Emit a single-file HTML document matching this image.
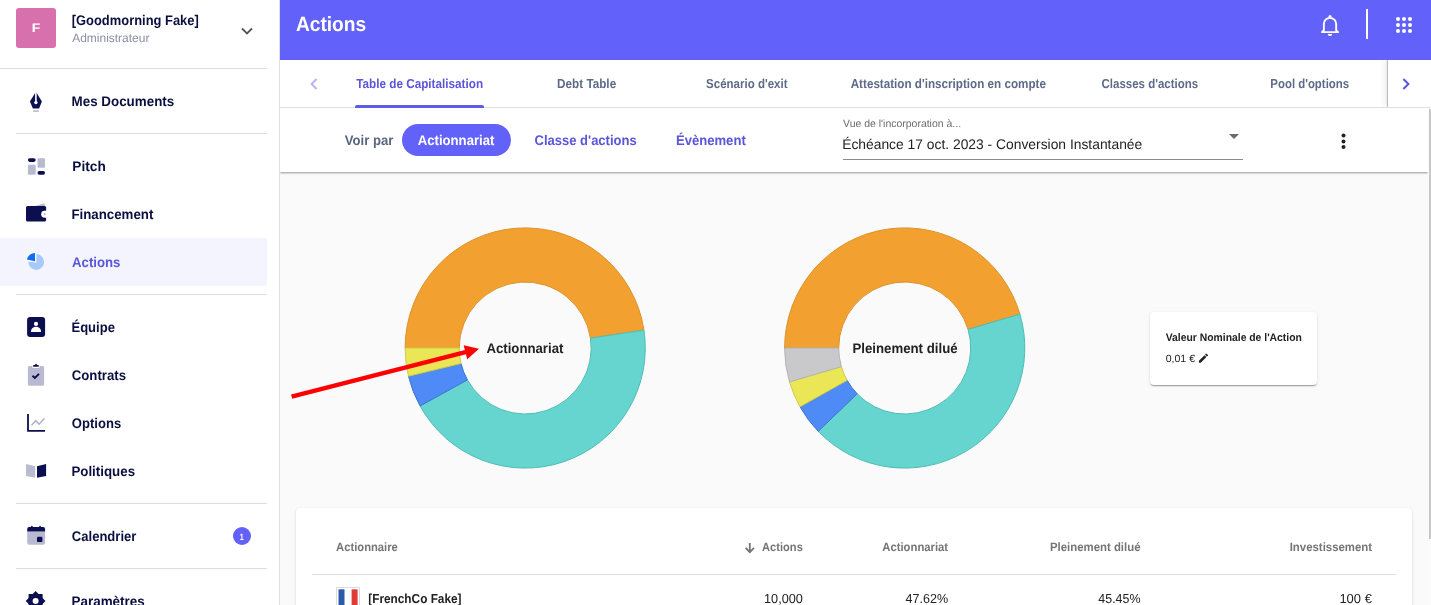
<!DOCTYPE html>
<html lang="fr">
<head>
<meta charset="utf-8">
<title>Actions</title>
<style>
*{box-sizing:border-box;margin:0;padding:0}
html,body{width:1431px;height:605px;overflow:hidden;background:#fafafa;font-family:"Liberation Sans",sans-serif;color:#0b0f3f}
.abs{position:absolute}
#txt{position:absolute;left:0;top:0;width:1431px;height:605px;z-index:9;will-change:transform;overflow:hidden}
.t{text-rendering:geometricPrecision;position:absolute;left:0;top:0;white-space:nowrap;line-height:20px;transform-origin:0 0;display:block}
#side{z-index:5;position:absolute;left:0;top:0;width:280px;height:605px;background:#fff;border-right:1px solid #dedede}
.div{position:absolute;left:16px;width:251px;height:1px;background:#dcdcdc}
#top{z-index:4;position:absolute;left:280px;top:0;width:1151px;height:60px;background:#6261fa}
#tabs{z-index:3;overflow:hidden;position:absolute;left:280px;top:60px;width:1151px;height:48px;background:#fff}
#filter{position:absolute;left:280px;top:108px;width:1148px;height:64px;background:#fff;box-shadow:0 1px 2px rgba(0,0,0,.4)}
svg{position:absolute;overflow:visible}

</style>
</head>
<body>
<div id="side">
  <div class="abs" style="left:16px;top:8px;width:40px;height:40px;border-radius:3px;background:#d970ae"></div>
  <svg style="left:239px;top:23px" width="16" height="16" viewBox="0 0 16 16"><path d="M3 5.5l5 5 5-5" fill="none" stroke="#555" stroke-width="1.8"/></svg>
  <div class="div" style="left:0;width:267px;top:68px"></div>
  <div class="div" style="top:133px"></div>
  <div class="abs" style="left:0;top:238px;width:267px;height:48px;background:#f3f4fe"></div>
  <div class="div" style="top:294px"></div>
  <div class="div" style="top:503px"></div>
  <div class="abs" style="left:233px;top:527px;width:18px;height:18px;border-radius:50%;background:#6261fa"></div>
  <div class="div" style="top:568px"></div>
<svg id="icons" style="left:0;top:0" width="280" height="605" viewBox="0 0 280 605">
<path d="M35.9 91.8L41.9 101.5 39.1 108.4H32.9L29.9 101.5Z" fill="#0b0f4f"/>
<rect x="35.1" y="91" width="1.6" height="11" fill="#fff"/><circle cx="35.9" cy="102.6" r="1.7" fill="#fff"/>
<rect x="33.1" y="110.4" width="5.7" height="1.3" fill="#a9aac4"/>
<rect x="27.9" y="158.2" width="7.8" height="3.7" rx="1.8" fill="#0b0f4f"/>
<rect x="37.5" y="158.2" width="7.5" height="9.6" rx="1" fill="#b9bad2"/>
<rect x="27.9" y="164.8" width="7.8" height="10" rx="1" fill="#b9bad2"/>
<rect x="37.5" y="171" width="7.5" height="3.7" rx="1.8" fill="#0b0f4f"/>
<path d="M35 206L44.3 203.2 45 206Z" fill="#b9bad2"/>
<rect x="26" y="205.9" width="20.1" height="15.7" rx="1.6" fill="#0b0f4f"/>
<circle cx="44.6" cy="214.2" r="3.4" fill="#fff"/><rect x="44.6" y="210.8" width="2" height="6.8" fill="#fff"/><circle cx="44.6" cy="214.2" r="1" fill="#b0b0c0"/>
<path d="M36.2 262V254.1A7.9 7.9 0 1 1 28.3 262Z" fill="#a9c8fb"/>
<path d="M35 261.2V252.9A8.3 8.3 0 0 0 26.9 259.4Z" fill="#0d6ef5" stroke="#fbfbff" stroke-width="2.6" paint-order="stroke"/>
<rect x="27.1" y="316.9" width="18" height="20.2" rx="3" fill="#0b0f4f"/>
<circle cx="36" cy="323.9" r="2.1" fill="#fff"/><path d="M30.9 332.1C30.9 325 41.1 325 41.1 332.1Z" fill="#fff"/>
<rect x="27.9" y="365.9" width="16.2" height="19.9" rx="1.6" fill="#b9bad2"/>
<rect x="32.2" y="363.5" width="7.5" height="4.4" rx="1.5" fill="#fff"/>
<rect x="33.1" y="364.9" width="5.7" height="1.9" rx="0.6" fill="#0b0f4f"/><rect x="35.2" y="363.9" width="1.6" height="1.5" fill="#0b0f4f"/>
<path d="M32.5 375.7L34.9 377.9 39 373.9" fill="none" stroke="#0b0f4f" stroke-width="2"/>
<path d="M28 414.1V430.9H45" fill="none" stroke="#0b0f4f" stroke-width="1.8"/>
<path d="M31.5 425.2L35.8 420.7 39.1 424.2 44.4 418.2" fill="none" stroke="#b0b1c8" stroke-width="1.5"/>
<path d="M26.05 463.9L35.2 466.2V477.8L26.05 476Z" fill="#b9bad2"/>
<path d="M37 466.2L46.1 463.9V476L37 477.8Z" fill="#0b0f4f"/>
<path d="M27.2 531.5H45.1V542.8A2 2 0 0 1 43.1 544.8H29.2A2 2 0 0 1 27.2 542.8Z" fill="#b9bad2"/>
<path d="M27.2 531.5V529.1A2 2 0 0 1 29.2 527.1H43.1A2 2 0 0 1 45.1 529.1V531.5Z" fill="#0b0f4f"/>
<rect x="31.1" y="525.9" width="1.5" height="2" fill="#0b0f4f"/><rect x="39.2" y="525.9" width="1.6" height="2" fill="#0b0f4f"/>
<rect x="37" y="536.8" width="5.4" height="5.3" rx="1.2" fill="#0b0f4f"/>
<g transform="translate(35.6 601)"><rect x="-7" y="-7" width="14" height="14" fill="#0b0f4f"/><rect x="-7" y="-7" width="14" height="14" fill="#0b0f4f" transform="rotate(45)"/><circle r="3" fill="#fff"/></g>
</svg>
</div>
<div id="top">
  <div class="abs" style="left:1086px;top:9px;width:2px;height:30px;background:#fff"></div>
  <svg id="grid" style="left:1115px;top:16px" width="18" height="18" viewBox="0 0 18 18" fill="#fff"><circle cx="3" cy="3" r="2"/><circle cx="9" cy="3" r="2"/><circle cx="15" cy="3" r="2"/><circle cx="3" cy="9" r="2"/><circle cx="9" cy="9" r="2"/><circle cx="15" cy="9" r="2"/><circle cx="3" cy="15" r="2"/><circle cx="9" cy="15" r="2"/><circle cx="15" cy="15" r="2"/></svg>
</div>
<div id="tabs">
  <svg style="left:30px;top:18px" width="8" height="12" viewBox="0 0 8 12"><path d="M6.6 1L1.6 6l5 5" fill="none" stroke="#b7b4ef" stroke-width="2"/></svg>
  <div class="abs" style="left:1108px;top:0;width:43px;height:47px;background:#fff;box-shadow:-1px 0 1px rgba(0,0,0,.22),-4px 0 6px rgba(0,0,0,.06)"></div>
  <svg style="left:1122px;top:18px" width="8" height="12" viewBox="0 0 8 12"><path d="M1.4 1l5 5-5 5" fill="none" stroke="#5b55d9" stroke-width="2"/></svg>
  <div class="abs" style="left:0;top:47px;width:1151px;height:1px;background:#e0e0e0"></div>
  <div class="abs" style="left:75px;top:45px;width:129.3px;height:3px;background:#5d5be8;border-radius:2px 2px 0 0"></div>
</div>
<div id="filter">
  <div class="abs" style="left:122px;top:16px;width:109px;height:32px;border-radius:16px;background:#6261fa"></div>
  <div class="abs" style="left:563px;top:51px;width:400px;height:1px;background:#8a8a8a"></div>
  <svg style="left:949px;top:26px" width="10" height="5" viewBox="0 0 10 5"><path d="M0 0h10L5 5z" fill="#6b6b6b"/></svg>
  <svg style="left:1061px;top:25px" width="5" height="17" viewBox="0 0 5 17" fill="#222"><circle cx="2.5" cy="2.6" r="2"/><circle cx="2.5" cy="8.4" r="2"/><circle cx="2.5" cy="14.1" r="2"/></svg>
</div>
<div class="abs" style="left:1428px;top:108px;width:3px;height:497px;background:#fbfbfb"></div>
<div class="abs" style="left:1429px;top:109px;width:2px;height:430px;background:#c8c8c8"></div>
<svg id="charts" style="left:280px;top:173px" width="1151" height="432" viewBox="280 173 1151 432">
<path d="M405.10 348.00A120.1 120.1 0 0 1 643.96 330.10L590.46 338.16A66.0 66.0 0 0 0 459.20 348.00Z" fill="#f2a131" stroke="#dc922c" stroke-width="1" stroke-linejoin="round"/>
<path d="M643.96 330.10A120.1 120.1 0 0 1 420.03 405.99L467.40 379.87A66.0 66.0 0 0 0 590.46 338.16Z" fill="#67d5cf" stroke="#4fbdb4" stroke-width="1" stroke-linejoin="round"/>
<path d="M420.03 405.99A120.1 120.1 0 0 1 408.45 376.18L461.04 363.49A66.0 66.0 0 0 0 467.40 379.87Z" fill="#4f8bf7" stroke="#3f74d4" stroke-width="1" stroke-linejoin="round"/>
<path d="M408.45 376.18A120.1 120.1 0 0 1 405.10 348.00L459.20 348.00A66.0 66.0 0 0 0 461.04 363.49Z" fill="#ebe655" stroke="#cfca4c" stroke-width="1" stroke-linejoin="round"/>
<path d="M784.60 348.00A120.1 120.1 0 0 1 1019.94 314.17L968.03 329.41A66.0 66.0 0 0 0 838.70 348.00Z" fill="#f2a131" stroke="#dc922c" stroke-width="1" stroke-linejoin="round"/>
<path d="M1019.94 314.17A120.1 120.1 0 0 1 818.21 431.32L857.17 393.79A66.0 66.0 0 0 0 968.03 329.41Z" fill="#67d5cf" stroke="#4fbdb4" stroke-width="1" stroke-linejoin="round"/>
<path d="M818.21 431.32A120.1 120.1 0 0 1 800.00 406.83L847.16 380.33A66.0 66.0 0 0 0 857.17 393.79Z" fill="#4f8bf7" stroke="#3f74d4" stroke-width="1" stroke-linejoin="round"/>
<path d="M800.00 406.83A120.1 120.1 0 0 1 789.47 381.87L841.38 366.61A66.0 66.0 0 0 0 847.16 380.33Z" fill="#ebe655" stroke="#cfca4c" stroke-width="1" stroke-linejoin="round"/>
<path d="M789.47 381.87A120.1 120.1 0 0 1 784.60 348.00L838.70 348.00A66.0 66.0 0 0 0 841.38 366.61Z" fill="#c9c9cb" stroke="#b4b4b6" stroke-width="1" stroke-linejoin="round"/>
<polygon points="292.13,398.68 465.97,354.25 467.23,359.19 479.00,348.70 463.64,345.14 464.90,350.08 291.07,394.52" fill="#ff0000"/>
</svg>
<div class="abs" style="left:1150px;top:312px;width:167px;height:73px;border-radius:4px;background:#fff;box-shadow:0 2px 1px -1px rgba(0,0,0,.2),0 1px 1px 0 rgba(0,0,0,.14),0 1px 3px 0 rgba(0,0,0,.12)"></div>
<div class="abs" style="left:296px;top:508px;width:1116px;height:120px;border-radius:4px;background:#fff;box-shadow:0 2px 1px -1px rgba(0,0,0,.2),0 1px 1px 0 rgba(0,0,0,.14),0 1px 3px 0 rgba(0,0,0,.12)"></div>
<div class="abs" style="left:312px;top:574px;width:1084px;height:1px;background:#dedede"></div>
<svg style="left:0;top:0;z-index:8" width="1431" height="605" viewBox="0 0 1431 605">
<path d="M1321.9 32.1L1323.85 30.2V24A6.15 6.15 0 0 1 1336.15 24V30.2L1338.1 32.1Z" fill="none" stroke="#fff" stroke-width="1.9" stroke-linejoin="round"/><circle cx="1330" cy="16.4" r="1.5" fill="#fff"/><path d="M1327.8 34H1332.2A2.2 1.9 0 0 1 1327.8 34Z" fill="#fff"/>
<path d="M749.8 543V552M745.6 547.9L749.8 552.2 754 547.9" fill="none" stroke="#757575" stroke-width="1.8"/>
<g transform="translate(1197.4 352.1) scale(0.505)"><path d="M3 17.25V21h3.750L17.810 9.940l-3.750-3.750L3 17.250zM20.710 7.040a.996.996 0 0 0 0-1.410l-2.340-2.340a.996.996 0 0 0-1.410 0l-1.830 1.830 3.750 3.750 1.830-1.830z" fill="#222"/></g>
<rect x="336.5" y="587.5" width="23" height="20" fill="#fff" stroke="#dcdcdc" stroke-width="1"/>
<rect x="338.5" y="589.3" width="6" height="16" fill="#2b5caa"/>
<rect x="351.6" y="589.3" width="6" height="16" fill="#e03c38"/>
</svg>

<div id="txt">
<span class="t" id="t_org" style="font-size:14px;font-weight:bold;color:#0b0f3f;transform:translate(71.73px,10.00px) scaleX(0.9228)">[Goodmorning Fake]</span>
<span class="t" id="t_adm" style="font-size:12px;font-weight:normal;color:#8a8fa3;transform:translate(72.16px,28.00px) scaleX(0.9988)">Administrateur</span>
<span class="t" id="t_F" style="font-size:12.5px;font-weight:bold;color:#ffffff;transform:translate(31.86px,18.00px) scaleX(1.1202)">F</span>
<span class="t" id="s_doc" style="font-size:14px;font-weight:bold;color:#0b0f3f;transform:translate(71.58px,91.00px) scaleX(0.9561)">Mes Documents</span>
<span class="t" id="s_pit" style="font-size:14px;font-weight:bold;color:#0b0f3f;transform:translate(72.36px,156.00px) scaleX(0.9761)">Pitch</span>
<span class="t" id="s_fin" style="font-size:14px;font-weight:bold;color:#0b0f3f;transform:translate(71.40px,204.00px) scaleX(0.9493)">Financement</span>
<span class="t" id="s_act" style="font-size:14px;font-weight:bold;color:#5b55d9;transform:translate(72.00px,252.00px) scaleX(0.9436)">Actions</span>
<span class="t" id="s_equ" style="font-size:14px;font-weight:bold;color:#0b0f3f;transform:translate(71.44px,317.00px) scaleX(0.9311)">Équipe</span>
<span class="t" id="s_con" style="font-size:14px;font-weight:bold;color:#0b0f3f;transform:translate(71.73px,365.00px) scaleX(0.9444)">Contrats</span>
<span class="t" id="s_opt" style="font-size:14px;font-weight:bold;color:#0b0f3f;transform:translate(71.85px,413.00px) scaleX(0.9330)">Options</span>
<span class="t" id="s_pol" style="font-size:14px;font-weight:bold;color:#0b0f3f;transform:translate(71.40px,461.00px) scaleX(0.9515)">Politiques</span>
<span class="t" id="s_cal" style="font-size:14px;font-weight:bold;color:#0b0f3f;transform:translate(71.87px,526.00px) scaleX(0.9307)">Calendrier</span>
<span class="t" id="s_par" style="font-size:14px;font-weight:bold;color:#0b0f3f;transform:translate(71.51px,591.00px) scaleX(0.9602)">Paramètres</span>
<span class="t" id="s_bdg" style="font-size:9px;font-weight:bold;color:#ffffff;transform:translate(239.87px,527.00px) scaleX(0.7909)">1</span>
<span class="t" id="h_act" style="font-size:20.6px;font-weight:bold;color:#ffffff;transform:translate(295.91px,15.00px) scaleX(0.9307)">Actions</span>
<span class="t" id="tb1" style="font-size:13px;font-weight:bold;color:#5b55d9;transform:translate(356.22px,74.00px) scaleX(0.9023)">Table de Capitalisation</span>
<span class="t" id="tb2" style="font-size:13px;font-weight:bold;color:#5d6b89;transform:translate(557.10px,74.00px) scaleX(0.9016)">Debt Table</span>
<span class="t" id="tb3" style="font-size:13px;font-weight:bold;color:#5d6b89;transform:translate(706.08px,74.00px) scaleX(0.8851)">Scénario d'exit</span>
<span class="t" id="tb4" style="font-size:13px;font-weight:bold;color:#5d6b89;transform:translate(850.70px,74.00px) scaleX(0.8971)">Attestation d'inscription en compte</span>
<span class="t" id="tb5" style="font-size:13px;font-weight:bold;color:#5d6b89;transform:translate(1101.51px,74.00px) scaleX(0.8842)">Classes d'actions</span>
<span class="t" id="tb6" style="font-size:13px;font-weight:bold;color:#5d6b89;transform:translate(1270.37px,74.00px) scaleX(0.8769)">Pool d'options</span>
<span class="t" id="f_voir" style="font-size:14px;font-weight:bold;color:#5a6680;transform:translate(344.78px,130.00px) scaleX(0.9367)">Voir par</span>
<span class="t" id="f_pill" style="font-size:14px;font-weight:bold;color:#ffffff;transform:translate(417.69px,130.00px) scaleX(0.9395)">Actionnariat</span>
<span class="t" id="f_cls" style="font-size:14px;font-weight:bold;color:#5b55d9;transform:translate(534.52px,130.00px) scaleX(0.9293)">Classe d'actions</span>
<span class="t" id="f_evt" style="font-size:14px;font-weight:bold;color:#5b55d9;transform:translate(675.94px,130.00px) scaleX(0.9346)">Évènement</span>
<span class="t" id="f_lbl" style="font-size:10.5px;font-weight:normal;color:#6b6b6b;transform:translate(843.06px,114.00px) scaleX(0.9968)">Vue de l'incorporation à...</span>
<span class="t" id="f_val" style="font-size:14px;font-weight:normal;color:#222222;transform:translate(842.18px,134.00px) scaleX(0.9885)">Échéance 17 oct. 2023 - Conversion Instantanée</span>
<span class="t" id="d_1" style="font-size:14px;font-weight:bold;color:#222222;transform:translate(486.40px,338.00px) scaleX(0.9425)">Actionnariat</span>
<span class="t" id="d_2" style="font-size:14px;font-weight:bold;color:#222222;transform:translate(852.43px,338.00px) scaleX(0.9451)">Pleinement dilué</span>
<span class="t" id="c_t" style="font-size:11px;font-weight:bold;color:#222222;transform:translate(1165.73px,328.00px) scaleX(0.9425)">Valeur Nominale de l'Action</span>
<span class="t" id="c_v" style="font-size:10.5px;font-weight:normal;color:#222222;transform:translate(1165.65px,349.00px) scaleX(1.0063)">0,01 €</span>
<span class="t" id="th1" style="font-size:12px;font-weight:bold;color:#757575;transform:translate(336.04px,537.00px) scaleX(0.9362)">Actionnaire</span>
<span class="t" id="th2" style="font-size:12px;font-weight:bold;color:#757575;transform:translate(762.09px,537.00px) scaleX(0.9255)">Actions</span>
<span class="t" id="th3" style="font-size:12px;font-weight:bold;color:#757575;transform:translate(882.30px,537.00px) scaleX(0.9403)">Actionnariat</span>
<span class="t" id="th4" style="font-size:12px;font-weight:bold;color:#757575;transform:translate(1049.95px,537.00px) scaleX(0.9495)">Pleinement dilué</span>
<span class="t" id="th5" style="font-size:12px;font-weight:bold;color:#757575;transform:translate(1289.66px,537.00px) scaleX(0.9510)">Investissement</span>
<span class="t" id="r1" style="font-size:13px;font-weight:bold;color:#222222;transform:translate(368.23px,589.00px) scaleX(0.9096)">[FrenchCo Fake]</span>
<span class="t" id="r2" style="font-size:13px;font-weight:normal;color:#222222;transform:translate(764.02px,589.00px) scaleX(0.9772)">10,000</span>
<span class="t" id="r3" style="font-size:13px;font-weight:normal;color:#222222;transform:translate(905.58px,589.00px) scaleX(0.9638)">47.62%</span>
<span class="t" id="r4" style="font-size:13px;font-weight:normal;color:#222222;transform:translate(1098.33px,589.00px) scaleX(0.9556)">45.45%</span>
<span class="t" id="r5" style="font-size:13px;font-weight:normal;color:#222222;transform:translate(1339.40px,589.00px) scaleX(0.9979)">100 €</span>
</div>
</body>
</html>
